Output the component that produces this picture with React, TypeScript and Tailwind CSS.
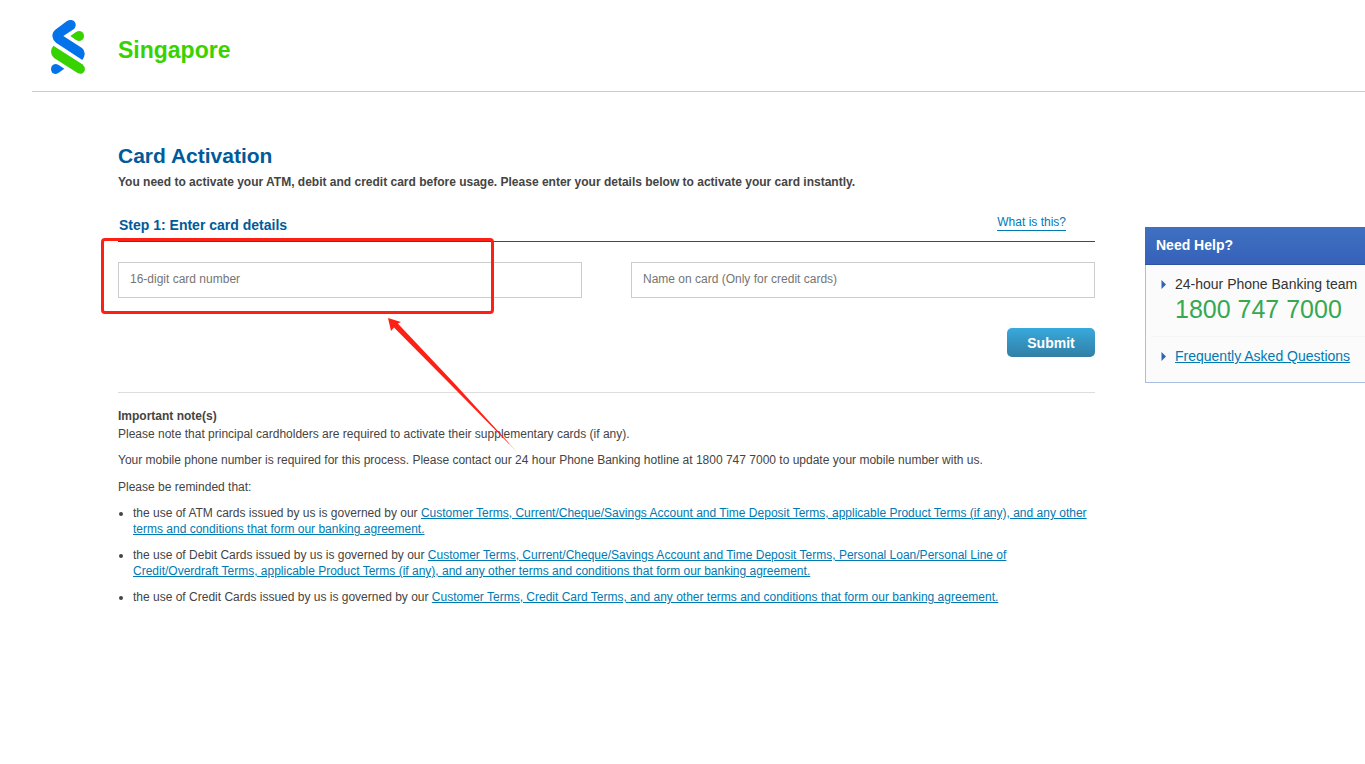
import React from "react";

const terms = [
  {
    lead: "the use of ATM cards issued by us is governed by our ",
    link: "Customer Terms, Current/Cheque/Savings Account and Time Deposit Terms, applicable Product Terms (if any), and any other terms and conditions that form our banking agreement.",
  },
  {
    lead: "the use of Debit Cards issued by us is governed by our ",
    link: "Customer Terms, Current/Cheque/Savings Account and Time Deposit Terms, Personal Loan/Personal Line of Credit/Overdraft Terms, applicable Product Terms (if any), and any other terms and conditions that form our banking agreement.",
  },
  {
    lead: "the use of Credit Cards issued by us is governed by our ",
    link: "Customer Terms, Credit Card Terms, and any other terms and conditions that form our banking agreement.",
  },
];

function Logo() {
  return (
    <svg viewBox="63 30 102 162" className="h-[54px] w-[34px]" aria-hidden="true">
      <path
        fill="#0473ea"
        d="M76 59 L111 33 Q125 26 134 35 Q141 46 133 56 L100 78 L156 114 Q165 121 164 133 Q163 143 157 150 L78 98 Q68 90 67 78 Q67 66 76 59Z"
      />
      <path fill="#38d200" d="M121 78 L138 66 Q151 59 159 68 Q165 78 159 88 Q151 97 138 90Z" />
      <path
        fill="#38d200"
        d="M70 107 L157 163 Q167 172 164 182 Q158 195 144 190 L72 144 Q63 136 63 125 Q64 115 70 107Z"
      />
      <path fill="#0473ea" d="M103 176 L86 188 Q74 196 66 187 Q60 177 66 167 Q74 158 86 165Z" />
    </svg>
  );
}

function Pointer() {
  return (
    <svg width="12" height="12" viewBox="0 0 12 12" className="mt-1 shrink-0" aria-hidden="true">
      <path d="M1.5 2 L6 6.5 L1.5 11Z" fill="#2f63b8" />
    </svg>
  );
}

function Highlight() {
  return (
    <div className="pointer-events-none absolute -top-6 -left-[17px]" aria-hidden="true">
      <div className="h-[76px] w-[393px] rounded-[4px] border-[3px] border-[#ff2015]" />
      <svg viewBox="0 0 131 135" className="absolute top-20 left-[287px] h-[135px] w-[131px]">
        <path d="M0 0 L13 4 L9.8 5.6 L66 65 L129 134 L63.5 67.5 L6 9.6 L3 13Z" fill="#ff2015" />
      </svg>
    </div>
  );
}

const field =
  "h-9 w-full min-w-0 border border-[#ccc] bg-white px-[11px] pb-0.5 text-xs text-[#444] placeholder:text-[#757575] placeholder:opacity-100 outline-none focus:border-[#007ab3]";

const link = "text-[#007ab3] underline underline-offset-1";

export default function App() {
  return (
    <div className="overflow-x-hidden bg-white font-['Liberation_Sans',Arial,sans-serif] text-xs text-[#444]">
      <header className="ml-8 flex h-[92px] items-center border-b border-[#ccc] pt-[3px] pl-[19px]">
        <Logo />
        <span className="ml-[33px] pt-1.5 text-[23px] leading-7 font-bold text-[#38d200]">Singapore</span>
      </header>

      <div className="flex items-start gap-[50px] pt-[50px] pl-[118px]">
        <main className="min-w-0 flex-1">
          <h1 className="text-[21px] leading-7 font-bold text-[#005b9a]">Card Activation</h1>
          <p className="mt-1 font-bold">
            You need to activate your ATM, debit and credit card before usage. Please enter your details below to
            activate your card instantly.
          </p>

          <div className="mt-6 flex h-7 items-start justify-between border-b border-[#005b9a] pr-[29px]">
            <h2 className="pt-px pl-px text-sm font-bold text-[#005b9a]">Step 1: Enter card details</h2>
            <a href="#help" className="border-b border-[#007ab3] text-[#007ab3]">
              What is this?
            </a>
          </div>

          <form className="relative mt-5" onSubmit={(event) => event.preventDefault()}>
            <div className="grid grid-cols-2 gap-[49px]">
              <input type="text" aria-label="16-digit card number" placeholder="16-digit card number" className={field} />
              <input
                type="text"
                aria-label="Name on card"
                placeholder="Name on card (Only for credit cards)"
                className={field}
              />
            </div>
            <div className="mt-[30px] flex justify-end">
              <button
                type="submit"
                className="h-[29px] w-[88px] rounded-[5px] bg-linear-to-b from-[#38a9dd] to-[#317fa5] text-sm font-bold text-white"
              >
                Submit
              </button>
            </div>
            <Highlight />
          </form>

          <section className="mt-[35px] border-t border-[#ddd] pt-[15px]">
            <h3 className="font-bold">Important note(s)</h3>
            <p className="mt-0.5">
              Please note that principal cardholders are required to activate their supplementary cards (if any).
            </p>
            <p className="mt-2.5">
              Your mobile phone number is required for this process. Please contact our 24 hour Phone Banking hotline at
              1800 747 7000 to update your mobile number with us.
            </p>
            <p className="mt-[11px]">Please be reminded that:</p>
            <ul className="mt-2.5 flex list-disc flex-col gap-2.5 pl-[15px]">
              {terms.map((term) => (
                <li key={term.lead}>
                  {term.lead}
                  <a href="#terms" className={link}>
                    {term.link}
                  </a>
                </li>
              ))}
            </ul>
          </section>
        </main>

        <aside className="mt-[85px] w-[220px] shrink-0 text-sm">
          <h2 className="h-[38px] border-b border-[#2d54a0] bg-linear-to-b from-[#3f70c1] to-[#3662b9] pl-[11px] leading-9 font-bold text-white">
            Need Help?
          </h2>
          <div className="border-b border-l border-[#a9bfe2] bg-[#fbfbfb] pb-4 pl-[5px] text-[#333]">
            <div className="flex gap-[3px] border-b border-[#f4f4f4] pt-[9px] pb-3 pl-[9px]">
              <Pointer />
              <div className="whitespace-nowrap">
                <p>24-hour Phone Banking team</p>
                <p className="text-[25px] leading-[30px] text-[#36a852]">1800 747 7000</p>
              </div>
            </div>
            <div className="flex gap-[3px] pt-[9px] pl-[9px]">
              <Pointer />
              <a href="#faq" className="whitespace-nowrap text-[#007ab3] underline underline-offset-1">
                Frequently Asked Questions
              </a>
            </div>
          </div>
        </aside>
      </div>
    </div>
  );
}
